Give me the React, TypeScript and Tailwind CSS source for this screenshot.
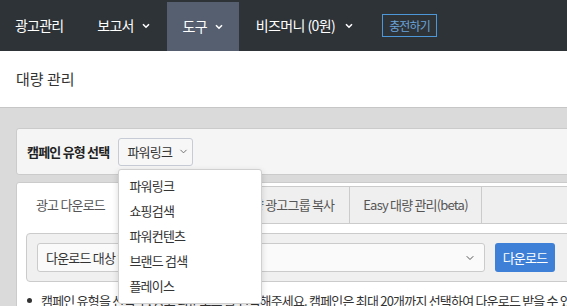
import { ChevronDown } from 'lucide-react';

const font = { fontFamily: '"Noto Sans CJK KR", "Noto Sans", sans-serif' };

const dropdownItems = ['파워링크', '쇼핑검색', '파워컨텐츠', '브랜드 검색', '플레이스'];

function NavChevron({ gap = 'ml-[8px]' }: { gap?: string }) {
  return (
    <svg width="8" height="6" viewBox="0 0 8 6" className={`${gap} mt-[1px]`}>
      <path d="M1 1.2 L4 4.2 L7 1.2" fill="none" stroke="currentColor" strokeWidth="1.6" />
    </svg>
  );
}

export default function App() {
  return (
    <div className="w-full min-h-screen overflow-hidden bg-[#dadada] text-[#333] tracking-[-0.8px]" style={font}>
      {/* 상단 메뉴 */}
      <nav className="h-[51px] bg-[#2e3338] flex items-stretch text-white text-[14px]">
        <div className="flex items-center pl-[15px] pr-[17px]">광고관리</div>
        <div className="flex items-center px-[17px]">
          보고서 <NavChevron />
        </div>
        <div className="flex items-center px-[16px] mt-[2px] bg-[#565f6f]">
          도구 <NavChevron />
        </div>
        <div className="flex items-center pl-[17px]">
          <span className="tracking-[-0.6px]">비즈머니 (0원)</span>
          <NavChevron gap="ml-[10px]" />
        </div>
        <div className="flex items-center ml-[29px]">
          <span className="h-[23px] px-[6px] flex items-center border border-[#4d97d8] text-[#6aa3d8] text-[12px]">
            충전하기
          </span>
        </div>
      </nav>

      <div className="h-[57px] bg-white border-b border-[#c6c6c6] flex items-center pl-4 text-[15px] text-[#333] tracking-normal">
        대량 관리
      </div>

      <div className="pt-5 pl-4 w-[1100px]">
        {/* 캠페인 유형 */}
        <div className="relative h-[47px] bg-[#f5f5f5] border border-[#cbcbcb] rounded-[3px] flex items-center pl-[10px]">
          <span className="text-[13px] font-bold text-[#222]">캠페인 유형 선택</span>
          <div className="relative ml-[9px]">
            <button className="h-[28px] w-[75px] flex items-center pl-[8px] bg-[#f7f7f7] border border-[#c6cbd5] rounded-[3px] text-[13px] text-[#333]">
              파워링크
              <ChevronDown className="ml-[6px] w-[11px] h-[11px] text-[#666]" strokeWidth={2} />
            </button>
            <div className="absolute left-0 top-[31px] z-10 w-[144px] bg-white border border-[#d0d0d0] rounded-[3px] shadow-[0_2px_6px_rgba(0,0,0,0.15)] pt-[4px] pb-[4px]">
              {dropdownItems.map((item) => (
                <div key={item} className="h-[25px] flex items-center pl-[10px] text-[13px] text-[#333]">
                  {item}
                </div>
              ))}
            </div>
          </div>
        </div>

        {/* 탭 카드 */}
        <div className="mt-[7px] bg-white border border-[#cbcbcb] rounded-[3px] pt-[3px]">
          <div className="flex h-[38px] bg-[#efefef] border-t border-b border-[#cbcbcb] text-[13px] text-[#555]">
            <div className="w-[107px] -mt-px -mb-px bg-white flex items-center justify-center">광고 다운로드</div>
            <div className="w-[102px] border-r border-[#cbcbcb] flex items-center justify-center">광고 업로드</div>
            <div className="w-[124px] border-r border-[#cbcbcb] flex items-center justify-center">대량 광고그룹 복사</div>
            <div className="w-[132px] border-r border-[#cbcbcb] flex items-center justify-center">Easy 대량 관리(beta)</div>
          </div>

          <div className="px-[9px] pt-[9px]">
            <div className="h-[49px] bg-[#f0f0f0] border border-[#cbcbcb] rounded-[4px] flex items-center pl-[10px]">
              <div className="w-[448px] h-[29px] bg-[#fafafa] border border-[#cbcbcb] rounded-[3px] flex items-center justify-between pl-[8px] pr-[8px] text-[13px] text-[#333]">
                <span>다운로드 대상 캠페인 선택</span>
                <ChevronDown className="w-[12px] h-[12px] text-[#555]" strokeWidth={2} />
              </div>
              <button className="ml-[10px] w-[60px] h-[29px] bg-[#3e7fd7] rounded-[3px] text-white text-[13px]">
                다운로드
              </button>
            </div>
            <ul className="pt-[9px] pl-[1px] text-[13px] text-[#333]">
              <li className="flex items-center whitespace-nowrap">
                <span className="w-[5px] h-[5px] rounded-full bg-[#333] mr-[9px] shrink-0" />
                캠페인 유형을 선택 후, 광고 다운로드 를 선택해주세요. 캠페인은 최대 20개까지 선택하여 다운로드 받을 수 있습니다.
              </li>
            </ul>
          </div>
        </div>
      </div>
    </div>
  );
}
